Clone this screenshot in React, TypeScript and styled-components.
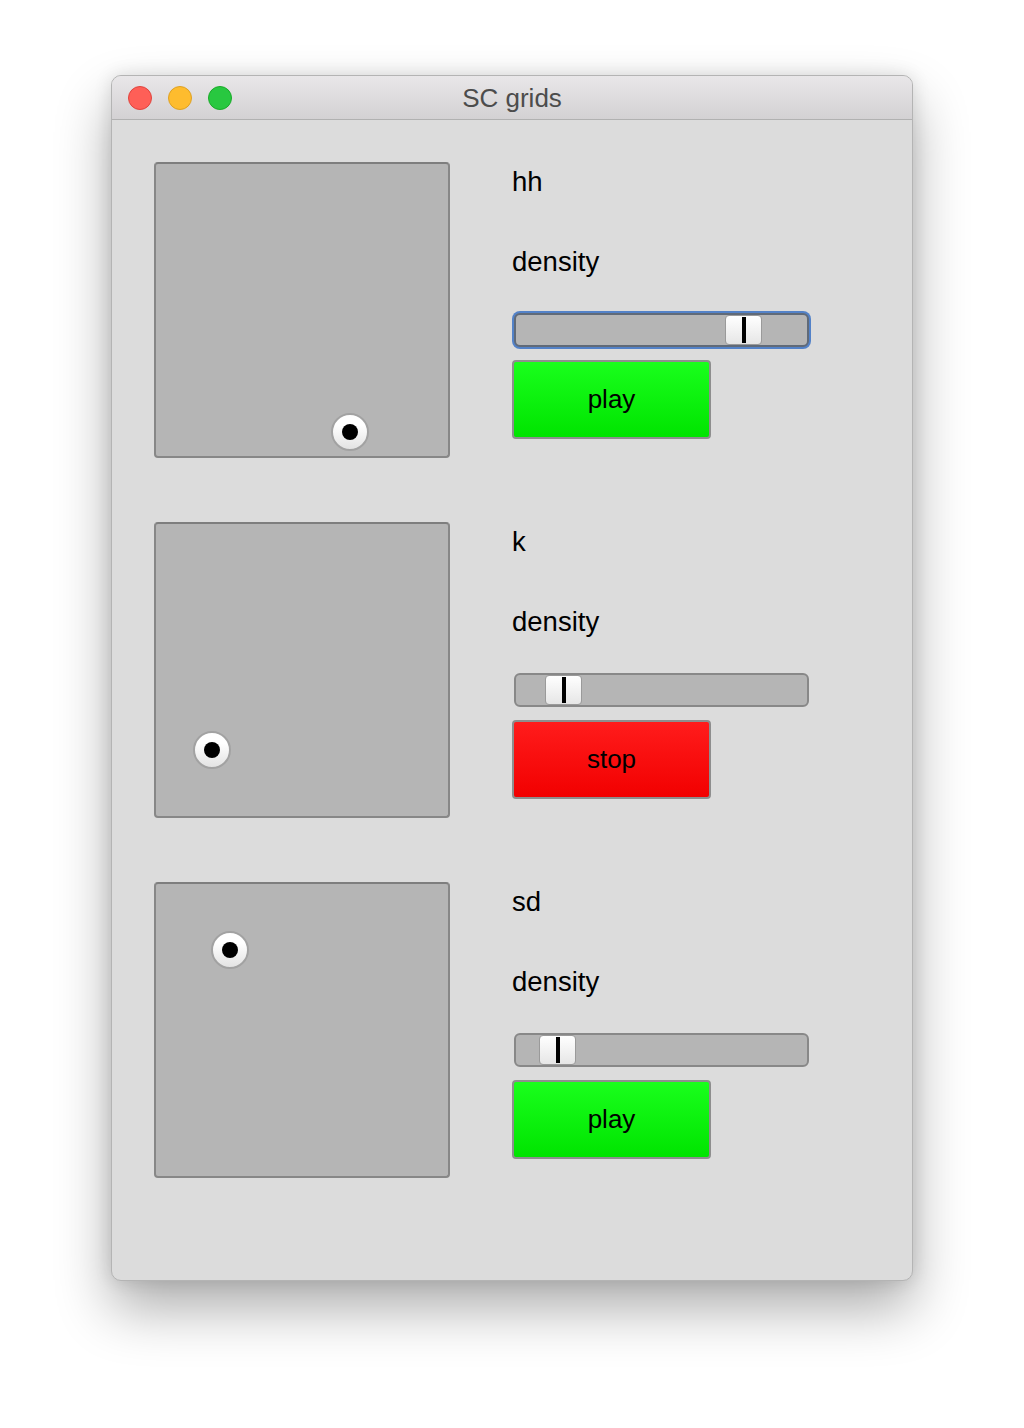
import styled, { createGlobalStyle } from "styled-components";

const GlobalStyle = createGlobalStyle`
    html, body {
        margin: 0;
        padding: 0;
        background: #ffffff;
    }
    body {
        font-family: "Liberation Sans", Arial, sans-serif;
    }
`

type Track = {
    name: string
    x: number
    y: number
    density: number
    playing: boolean
    focused?: boolean
}

const tracks: Track[] = [
    { name: 'hh', x: 196, y: 270, density: 0.818, playing: false, focused: true },
    { name: 'k', x: 58, y: 228, density: 0.12, playing: true },
    { name: 'sd', x: 76, y: 68, density: 0.097, playing: false },
]

const SLIDER_W = 295
const THUMB_W = 37

const TrafficLights = () => (
    <Lights>
        <Light $color="#fe5f57" $edge="#e0443e" />
        <Light $color="#febc2e" $edge="#dea123" />
        <Light $color="#28c840" $edge="#1aab29" />
    </Lights>
)

const Slider = ({ value, focused }: { value: number, focused?: boolean }) => (
    <SliderTrack $focused={focused}>
        <Thumb style={{ left: Math.round(value * (SLIDER_W - THUMB_W)) - 2 }}>
            <ThumbBar />
        </Thumb>
    </SliderTrack>
)

const Row = ({ track }: { track: Track }) => (
    <RowWrap>
        <Pad>
            <Knob style={{ left: track.x - 2, top: track.y - 2 }}>
                <KnobDot />
            </Knob>
        </Pad>
        <Controls>
            <Label>{track.name}</Label>
            <Label>density</Label>
            <Slider value={track.density} focused={track.focused} />
            <PlayButton $playing={track.playing}>{track.playing ? 'stop' : 'play'}</PlayButton>
        </Controls>
    </RowWrap>
)

const App = () => {
    return (
        <>
            <GlobalStyle />
            <Page>
                <Window>
                    <TitleBar>
                        <TrafficLights />
                        <Title>SC grids</Title>
                    </TitleBar>
                    <Content>
                        {tracks.map(t => (
                            <Row key={t.name} track={t} />
                        ))}
                    </Content>
                </Window>
            </Page>
        </>
    )
}
export default App

const Page = styled.div`
    width: 1024px;
    height: 1428px;
    padding: 75px 0 0 111px;
    box-sizing: border-box;
    overflow: hidden;
`

const Window = styled.div`
    width: 802px;
    height: 1206px;
    box-sizing: border-box;
    border: 1px solid #b4b4b4;
    border-radius: 10px;
    background: #dcdcdc;
    overflow: hidden;
    display: flex;
    flex-direction: column;
    box-shadow: 0 28px 55px rgba(0, 0, 0, 0.32), 0 0 18px rgba(0, 0, 0, 0.12);
`

const TitleBar = styled.div`
    position: relative;
    height: 43px;
    flex: none;
    display: flex;
    align-items: center;
    justify-content: center;
    background: linear-gradient(#e9e7e9, #d3d1d3);
    border-bottom: 1px solid #b1b1b1;
`

const Lights = styled.div`
    position: absolute;
    left: 16px;
    top: 10px;
    display: flex;
    gap: 16px;
`

const Light = styled.span<{ $color: string, $edge: string }>`
    width: 24px;
    height: 24px;
    border-radius: 50%;
    box-sizing: border-box;
    background: ${p => p.$color};
    border: 1px solid ${p => p.$edge};
`

const Title = styled.div`
    font-size: 26px;
    color: #4c4c4c;
    margin-top: 2px;
`

const Content = styled.div`
    padding: 42px 0 0 42px;
    display: flex;
    flex-direction: column;
    gap: 64px;
`

const RowWrap = styled.div`
    display: flex;
    gap: 62px;
`

const Pad = styled.div`
    position: relative;
    width: 296px;
    height: 296px;
    box-sizing: border-box;
    background: #b5b5b5;
    border: 2px solid #878787;
    border-top-color: #7e7e7e;
    border-radius: 4px;
`

const Knob = styled.div`
    position: absolute;
    width: 38px;
    height: 38px;
    margin: -19px 0 0 -19px;
    box-sizing: border-box;
    border-radius: 50%;
    border: 2px solid #a2a2a2;
    background: linear-gradient(#ffffff 30%, #e3e3e3);
    display: flex;
    align-items: center;
    justify-content: center;
`

const KnobDot = styled.span`
    width: 16px;
    height: 16px;
    border-radius: 50%;
    background: #000;
`

const Controls = styled.div`
    display: flex;
    flex-direction: column;
    align-items: flex-start;
    color: #000;
`

const Label = styled.div`
    height: 40px;
    line-height: 40px;
    font-size: 27.5px;
    margin-bottom: 40px;
    &:nth-child(2) {
        margin-bottom: 31px;
    }
`

const SliderTrack = styled.div<{ $focused?: boolean }>`
    position: relative;
    width: ${SLIDER_W}px;
    height: 34px;
    margin-left: 2px;
    box-sizing: border-box;
    background: #b5b5b5;
    border: 2px solid ${p => p.$focused ? '#606a78' : '#888888'};
    border-radius: 6px;
    box-shadow: ${p => p.$focused ? '0 0 0 2px #5382c8' : 'none'};
`

const Thumb = styled.div`
    position: absolute;
    top: 0;
    width: ${THUMB_W}px;
    height: 30px;
    box-sizing: border-box;
    border: 1px solid #9a9a9a;
    border-radius: 4px;
    background: linear-gradient(#ffffff, #e6e6e6);
    display: flex;
    align-items: center;
    justify-content: center;
`

const ThumbBar = styled.span`
    width: 4px;
    height: 26px;
    background: #000;
`

const PlayButton = styled.button<{ $playing: boolean }>`
    margin-top: 13px;
    width: 199px;
    height: 79px;
    box-sizing: border-box;
    border: 2px solid #8e8e8e;
    border-radius: 4px;
    font-family: "Liberation Sans", Arial, sans-serif;
    font-size: 26px;
    color: #000;
    padding: 0;
    background: ${p => p.$playing
        ? 'linear-gradient(#ff1c1c, #f20000)'
        : 'linear-gradient(#19ff1c, #00e400)'};
`
